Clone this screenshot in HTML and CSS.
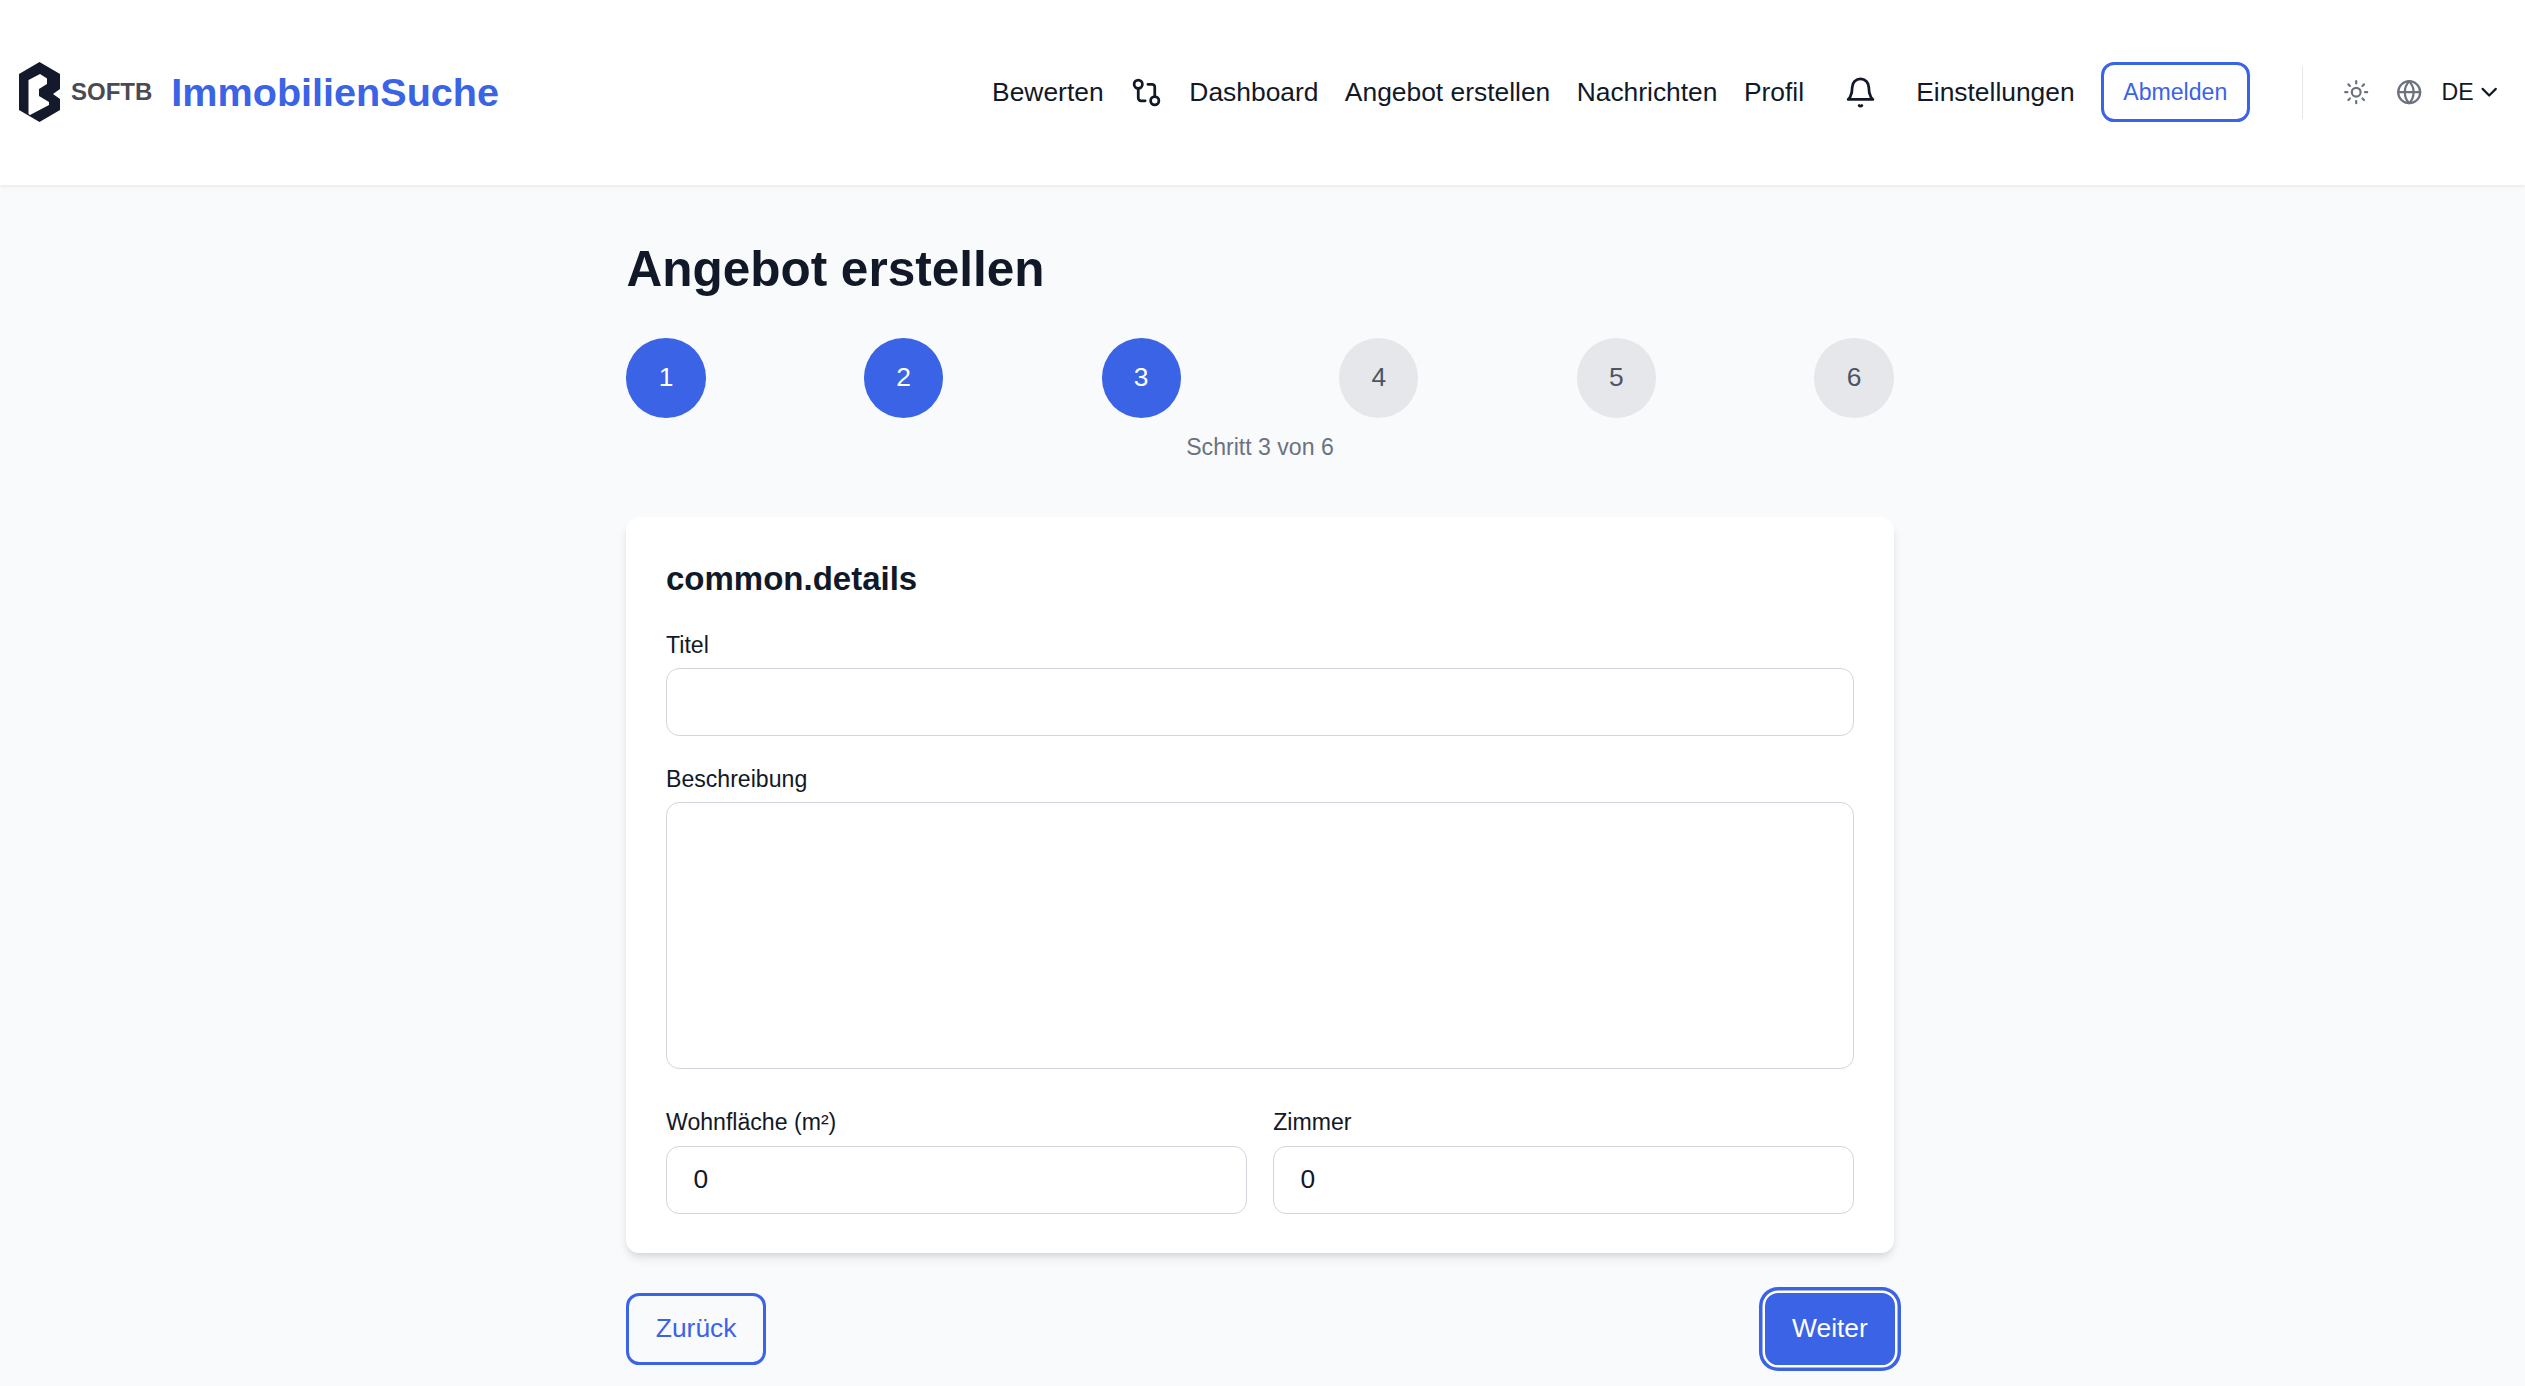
FILE: index.html
```html
<!DOCTYPE html>
<html lang="de">
<head>
    <meta charset="UTF-8">
    <meta name="viewport" content="width=device-width, initial-scale=1.0">
    <title>Angebot erstellen</title>
    <link rel="stylesheet" href="styles.css">
</head>
<body>

    <header class="header">
        <a class="brand" href="#">
            <span class="logo">
                <svg class="logo-mark" viewBox="0 0 41 60">
                    <path fill="#141a2b" d="M20.500 0 41 12V27L34 32 41 37V48L20.500 60 0 48V12Z"/>
                    <path fill="#fff" d="M9.500 18 21 12 28 16.500V22L20 27V34L30 40V43L11 53 9.500 52Z"/>
                </svg>
                <span class="logo-text">SOFTB</span>
            </span>
            <span class="brand-name">ImmobilienSuche</span>
        </a>

        <nav class="nav">
            <a href="#">Bewerten</a>
            <a class="nav-icon" href="#">
                <svg class="icon" viewBox="0 0 24 24">
                    <circle cx="18" cy="18" r="3"/>
                    <circle cx="6" cy="6" r="3"/>
                    <path d="M13 6h3a2 2 0 0 1 2 2v7"/>
                    <path d="M11 18H8a2 2 0 0 1-2-2V9"/>
                </svg>
            </a>
            <a href="#">Dashboard</a>
            <a href="#">Angebot erstellen</a>
            <a href="#">Nachrichten</a>
            <a href="#">Profil</a>
            <a class="nav-icon bell" href="#">
                <svg class="icon" viewBox="0 0 24 24">
                    <path d="M6 8a6 6 0 0 1 12 0c0 7 3 9 3 9H3s3-2 3-9"/>
                    <path d="M11 21.500a1.300 1.300 0 0 0 2 0"/>
                </svg>
            </a>
            <a href="#">Einstellungen</a>
            <a class="logout" href="#">Abmelden</a>
        </nav>

        <div class="tools">
            <svg class="tool-icon" viewBox="0 0 24 24">
                <circle cx="12" cy="12" r="4"/>
                <path d="M12 2v2M12 20v2M4.900 4.900l1.400 1.400M17.700 17.700l1.400 1.400M2 12h2M20 12h2M6.300 17.700l-1.400 1.400M19.100 4.900l-1.400 1.400"/>
            </svg>
            <svg class="tool-icon" viewBox="0 0 24 24">
                <circle cx="12" cy="12" r="10"/>
                <path d="M12 2a14.500 14.500 0 0 0 0 20 14.500 14.500 0 0 0 0-20M2 12h20"/>
            </svg>
            <span class="lang">DE
                <svg class="chevron" viewBox="0 0 24 24"><path d="m6 9 6 6 6-6"/></svg>
            </span>
        </div>
    </header>

    <main class="container">
        <h1>Angebot erstellen</h1>

        <div class="steps">
            <span class="step done">1</span>
            <span class="step done">2</span>
            <span class="step done">3</span>
            <span class="step">4</span>
            <span class="step">5</span>
            <span class="step">6</span>
        </div>
        <p class="step-label">Schritt 3 von 6</p>

        <form class="card">
            <h2>common.details</h2>

            <div class="field">
                <label for="title">Titel</label>
                <input id="title" type="text">
            </div>

            <div class="field">
                <label for="description">Beschreibung</label>
                <textarea id="description" rows="5"></textarea>
            </div>

            <div class="field-row">
                <div class="field">
                    <label for="area">Wohnfläche (m²)</label>
                    <input id="area" type="number" value="0">
                </div>
                <div class="field">
                    <label for="rooms">Zimmer</label>
                    <input id="rooms" type="number" value="0">
                </div>
            </div>
        </form>

        <div class="actions">
            <button class="btn btn-outline" type="button">Zurück</button>
            <button class="btn btn-primary" type="button">Weiter</button>
        </div>
    </main>

</body>
</html>
```
FILE: styles.css
```css
html {
    font-size: 26.4px;
}
body {
    font-family: "Liberation Sans", Arial, sans-serif;
    background-color: #f9fafb;
    color: #111827;
    margin: 0;
    padding: 0;
    line-height: 1.5;
}
a {
    color: inherit;
    text-decoration: none;
}

/* Header */
.header {
    display: flex;
    align-items: center;
    height: 184.8px;
    padding: 0 23px 0 19px;
    box-sizing: border-box;
    background-color: #fff;
    box-shadow: 0 1.65px 3.3px rgba(0, 0, 0, 0.06);
}
.brand {
    display: flex;
    align-items: center;
    gap: 19px;
    margin-right: auto;
}
.logo {
    display: flex;
    align-items: center;
    gap: 11px;
}
.logo-mark {
    width: 41px;
    height: 60px;
}
.logo-text {
    font-size: 24px;
    font-weight: 700;
    color: #4a4a54;
}
.brand-name {
    font-size: 1.5rem;
    font-weight: 700;
    color: #3a63e6;
}
.nav {
    display: flex;
    align-items: center;
    gap: 1rem;
}
.nav-icon {
    display: flex;
}
.icon {
    width: 33px;
    height: 33px;
    fill: none;
    stroke: #111827;
    stroke-width: 2;
    stroke-linecap: round;
    stroke-linejoin: round;
}
.bell {
    margin: 0 0.5rem;
}
.logout {
    padding: 0.4rem 0.73rem;
    font-size: 0.875rem;
    line-height: 1.25rem;
    color: #3a63e6;
    border: 3.3px solid #3a63e6;
    border-radius: 0.5rem;
}
.tools {
    display: flex;
    align-items: center;
    gap: 1rem;
    height: 53px;
    margin-left: 2rem;
    padding-left: 1.5rem;
    border-left: 1.65px solid #e5e7eb;
}
.tool-icon {
    width: 26.4px;
    height: 26.4px;
    fill: none;
    stroke: #6b7280;
    stroke-width: 2;
    stroke-linecap: round;
    stroke-linejoin: round;
}
.lang {
    display: flex;
    align-items: center;
    gap: 2px;
    margin-left: -7px;
    font-size: 0.875rem;
}
.chevron {
    width: 26.4px;
    height: 26.4px;
    fill: none;
    stroke: #111827;
    stroke-width: 2;
    stroke-linecap: round;
    stroke-linejoin: round;
}

/* Main */
.container {
    width: 48rem;
    margin: 0 auto;
    padding: 54.6px 5px 12px 0;
}
h1 {
    margin: 0 0 1.5rem;
    font-size: 1.875rem;
    line-height: 2.25rem;
    font-weight: 700;
}
.steps {
    display: flex;
    justify-content: space-between;
}
.step {
    display: flex;
    align-items: center;
    justify-content: center;
    width: 3rem;
    height: 3rem;
    border-radius: 50%;
    background-color: #e5e7eb;
    color: #4b5563;
    font-size: 1rem;
}
.step.done {
    background-color: #3a63e6;
    color: #fff;
}
.step-label {
    margin: 0.5rem 0 2rem;
    font-size: 0.875rem;
    line-height: 1.25rem;
    color: #6b7280;
    text-align: center;
}
.card {
    padding: 1.5rem;
    background-color: #fff;
    border-radius: 0.5rem;
    box-shadow: 0 6.6px 9.9px -1.65px rgba(0, 0, 0, 0.1), 0 3.3px 6.6px -3.3px rgba(0, 0, 0, 0.1);
}
h2 {
    margin: 0 0 1rem;
    font-size: 1.25rem;
    line-height: 1.75rem;
    font-weight: 700;
}
.field {
    margin-bottom: 1rem;
}
.field label {
    display: block;
    margin-bottom: 0.25rem;
    font-size: 0.875rem;
    line-height: 1.25rem;
}
.field input, .field textarea {
    display: block;
    width: 100%;
    padding: 0.5rem 1rem;
    box-sizing: border-box;
    font-family: inherit;
    font-size: 1rem;
    line-height: 1.5rem;
    color: #111827;
    background-color: #fff;
    border: 1.65px solid #d1d5db;
    border-radius: 0.5rem;
    outline: none;
    resize: none;
    appearance: textfield;
}
.field textarea {
    height: 267px;
}
.field-row {
    display: grid;
    grid-template-columns: 1fr 1fr;
    gap: 1rem;
    margin-top: 1.4rem;
}
.field-row .field {
    margin-bottom: 0;
}
.actions {
    display: flex;
    justify-content: space-between;
    margin-top: 1.5rem;
}
.btn {
    padding: 0.5rem 1rem;
    font-family: inherit;
    font-size: 1rem;
    line-height: 1.5rem;
    border-radius: 0.5rem;
    border: 3.3px solid #3a63e6;
}
.btn-outline {
    color: #3a63e6;
    background-color: transparent;
}
.btn-primary {
    margin-right: -1px;
    padding: 0.5rem 0.9rem;
    color: #fff;
    background-color: #3a63e6;
    box-shadow: 0 0 0 2.5px #fff, 0 0 0 6px #3a63e6;
}
```
